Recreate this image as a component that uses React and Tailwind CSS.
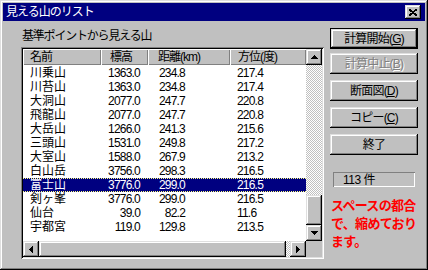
import React from "react";

const raised =
  "bg-[#c0c0c0] shadow-[inset_-1px_-1px_#000,inset_1px_1px_#dfdfdf,inset_-2px_-2px_#808080,inset_2px_2px_#fff]";
const checker =
  "bg-[repeating-conic-gradient(#c0c0c0_0_25%,#ffffff_0_50%)] bg-[length:2px_2px]";

const rows = [
  ["川乗山", "1363.0", "234.8", "217.4"],
  ["川苔山", "1363.0", "234.8", "217.4"],
  ["大洞山", "2077.0", "247.7", "220.8"],
  ["飛龍山", "2077.0", "247.7", "220.8"],
  ["大岳山", "1266.0", "241.3", "215.6"],
  ["三頭山", "1531.0", "249.8", "217.2"],
  ["大室山", "1588.0", "267.9", "213.2"],
  ["白山岳", "3756.0", "298.3", "216.5"],
  ["富士山", "3776.0", "299.0", "216.5"],
  ["剣ヶ峯", "3776.0", "299.0", "216.5"],
  ["仙台", "39.0", "82.2", "11.6"],
  ["宇都宮", "119.0", "129.8", "213.5"],
];

function Tri({ dir }) {
  if (dir === "up")
    return (
      <svg width="7" height="4" shapeRendering="crispEdges">
        <polygon points="3.5,0 7,4 0,4" fill="#000" />
      </svg>
    );
  if (dir === "down")
    return (
      <svg width="7" height="4" shapeRendering="crispEdges">
        <polygon points="0,0 7,0 3.5,4" fill="#000" />
      </svg>
    );
  if (dir === "left")
    return (
      <svg width="4" height="7" shapeRendering="crispEdges">
        <polygon points="4,0 4,7 0,3.5" fill="#000" />
      </svg>
    );
  return (
    <svg width="4" height="7" shapeRendering="crispEdges">
      <polygon points="0,0 4,3.5 0,7" fill="#000" />
    </svg>
  );
}

function Btn({ children, def, disabled, className = "" }) {
  const inner = (
    <div
      className={`${raised} flex-1 flex items-center justify-center text-[12px] tracking-[-0.8px] leading-none ${
        disabled ? "text-[#808080] [text-shadow:1px_1px_0_#fff]" : "text-black"
      }`}
    >
      {children}
    </div>
  );
  return (
    <div
      className={`w-[88px] h-[21px] flex ${def ? "border border-black" : ""} ${className}`}
    >
      {inner}
    </div>
  );
}

export default function App() {
  return (
    <div className="w-[428px] h-[270px] bg-[#c0c0c0] p-[3px] flex flex-col shadow-[inset_-1px_-1px_#000,inset_1px_1px_#dfdfdf,inset_-2px_-2px_#808080,inset_2px_2px_#fff] font-['Liberation_Sans','Noto_Sans_CJK_JP',sans-serif] overflow-hidden select-none">
      {/* title bar */}
      <div className="h-[18px] bg-[#000080] flex items-center justify-between pl-[3px] pr-[4px] shrink-0">
        <span className="text-white text-[12px] tracking-[-1px] leading-none">
          見える山のリスト
        </span>
        <div className={`${raised} w-[16px] h-[14px] flex items-center justify-center`}>
          <svg width="8" height="7" shapeRendering="crispEdges">
            <path d="M0 0 L8 7 M8 0 L0 7" stroke="#000" strokeWidth="1.8" />
          </svg>
        </div>
      </div>

      <div className="flex flex-1">
        {/* left */}
        <div className="pl-[18px] flex flex-col">
          <div className="mt-[8px] ml-[1px] h-[14px] text-[12px] tracking-[-1.2px] leading-[14px] text-black">
            基準ポイントから見える山
          </div>
          <div className="mt-[4px] w-[303px] h-[212px] p-[2px] flex flex-col shadow-[inset_1px_1px_#808080,inset_-1px_-1px_#fff,inset_2px_2px_#000,inset_-2px_-2px_#dfdfdf]">
            <div className="flex h-[192px]">
              {/* list */}
              <div className="w-[283px] bg-white flex flex-col">
                <div className="flex h-[16px] text-[12px] tracking-[-1px] leading-none text-black">
                  <div className="w-[78px] bg-[#c0c0c0] shadow-[inset_1px_1px_#fff,inset_-1px_-1px_#808080] flex items-center pl-[7px]">
                    名前
                  </div>
                  <div className="w-[47px] bg-[#c0c0c0] shadow-[inset_1px_1px_#fff,inset_-1px_-1px_#808080] flex items-center pl-[9px]">
                    標高
                  </div>
                  <div className="w-[82px] bg-[#c0c0c0] shadow-[inset_1px_1px_#fff,inset_-1px_-1px_#808080] flex items-center pl-[10px]">
                    距離(km)
                  </div>
                  <div className="w-[76px] bg-[#c0c0c0] shadow-[inset_1px_1px_#fff,inset_-1px_-1px_#808080] flex items-center pl-[8px]">
                    方位(度)
                  </div>
                </div>
                <div className="pt-[1px] flex flex-col">
                  {rows.map((r, i) => {
                    const sel = i === 8;
                    return (
                      <div
                        key={i}
                        className={`flex h-[14px] items-center overflow-hidden ${
                          sel
                            ? "bg-[#000080] text-white border-y border-dotted border-[#ffff7f]"
                            : "text-black"
                        }`}
                      >
                        <div className="w-[78px] pl-[7px] text-[12px] leading-[12px]">
                          {r[0]}
                        </div>
                        <div className="w-[47px] pr-[8px] text-right text-[12px] leading-[12px] tracking-[-0.8px]">
                          {r[1]}
                        </div>
                        <div className="w-[37px] text-right text-[12px] leading-[12px] tracking-[-0.8px]">
                          {r[2]}
                        </div>
                        <div className="w-[45px]" />
                        <div className="w-[76px] pl-[7px] text-[12px] leading-[12px] tracking-[-0.8px]">
                          {r[3]}
                        </div>
                      </div>
                    );
                  })}
                </div>
              </div>
              {/* vscroll */}
              <div className="w-[16px] flex flex-col">
                <div className={`${raised} h-[16px] flex items-center justify-center`}>
                  <Tri dir="up" />
                </div>
                <div className={`${checker} flex-1`} />
                <div className={`${raised} h-[30px]`} />
                <div className={`${raised} h-[16px] flex items-center justify-center`}>
                  <Tri dir="down" />
                </div>
              </div>
            </div>
            {/* hscroll */}
            <div className="flex h-[16px]">
              <div className={`${raised} w-[16px] flex items-center justify-center`}>
                <Tri dir="left" />
              </div>
              <div className={`${raised} w-[247px]`} />
              <div className={`${checker} w-[4px]`} />
              <div className={`${raised} w-[16px] flex items-center justify-center`}>
                <Tri dir="right" />
              </div>
              <div className="w-[16px] bg-[#c0c0c0]" />
            </div>
          </div>
        </div>

        {/* right */}
        <div className="ml-[6px] pt-[7px] flex flex-col">
          <Btn def>
            計算開始(<u>G</u>)
          </Btn>
          <Btn disabled className="mt-[4px]">
            計算中止(<u>B</u>)
          </Btn>
          <Btn className="mt-[6px]">
            断面図(<u>D</u>)
          </Btn>
          <Btn className="mt-[6px]">
            コピー(<u>C</u>)
          </Btn>
          <Btn className="mt-[6px]">終了</Btn>
          <div className="mt-[17px] ml-[3px] w-[82px] h-[15px] shadow-[inset_1px_1px_#808080,inset_-1px_-1px_#fff] flex items-center pl-[10px] text-[12px] tracking-[-0.5px] leading-none text-black">
            113 件
          </div>
          <div className="mt-[10px] ml-[1px] text-[13px] font-bold tracking-[-0.7px] leading-[18px] text-[#ff0000]">
            <div>スペースの都合</div>
            <div>で、縮めており</div>
            <div>ます。</div>
          </div>
        </div>
      </div>
    </div>
  );
}
